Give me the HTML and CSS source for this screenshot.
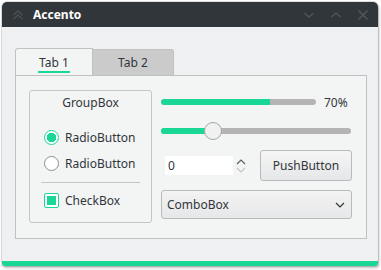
FILE: index.html
```html
<!DOCTYPE html>
<html>
<head>
<meta charset="utf-8">
<link rel="stylesheet" href="styles.css">
</head>
<body>
<div class="window">
  <div class="titlebar">
    <svg class="app-icon" width="12" height="12" viewBox="0 0 12 12"><path d="M1.5 6 L6 2 L10.5 6 M1.5 10 L6 6 L10.5 10" fill="none" stroke="#4a5057" stroke-width="1.5"/></svg>
    <span class="title">Accento</span>
    <div class="controls">
      <svg width="12" height="12" viewBox="0 0 12 12"><path d="M1.5 4 L6 8 L10.5 4" fill="none" stroke="#4f555c" stroke-width="1.5"/></svg>
      <svg width="12" height="12" viewBox="0 0 12 12"><path d="M1.5 8 L6 4 L10.5 8" fill="none" stroke="#4f555c" stroke-width="1.5"/></svg>
      <svg width="12" height="12" viewBox="0 0 12 12"><path d="M1.5 1.5 L10.5 10.5 M10.5 1.5 L1.5 10.5" fill="none" stroke="#4f555c" stroke-width="1.5"/></svg>
    </div>
  </div>
  <div class="content">
    <div class="tabs">
      <div class="tabbar">
        <div class="tab active"><span>Tab 1</span></div>
        <div class="tab"><span>Tab 2</span></div>
      </div>
      <div class="pane">
        <div class="groupbox">
          <div class="gb-title">GroupBox</div>
          <div class="option"><span class="radio checked"></span><span>RadioButton</span></div>
          <div class="option"><span class="radio"></span><span>RadioButton</span></div>
          <div class="sep"></div>
          <div class="option"><span class="check"></span><span>CheckBox</span></div>
        </div>
        <div class="right">
          <div class="progress-row">
            <div class="progress"><div class="fill" style="width:70%"></div></div>
            <span class="pct">70%</span>
          </div>
          <div class="slider-row">
            <div class="slider"><div class="sfill"></div><div class="handle"></div></div>
          </div>
          <div class="spin-row">
            <div class="spin"><span class="spin-field">0</span>
              <div class="arrows">
                <svg width="10" height="6" viewBox="0 0 10 6"><path d="M1 5 L5 1 L9 5" fill="none" stroke="#5c6166" stroke-width="1.2"/></svg>
                <svg width="10" height="6" viewBox="0 0 10 6"><path d="M1 1 L5 5 L9 1" fill="none" stroke="#c4c6c8" stroke-width="1.2"/></svg>
              </div>
            </div>
            <div class="button">PushButton</div>
          </div>
          <div class="combo"><span>ComboBox</span>
            <svg width="10" height="6" viewBox="0 0 10 6"><path d="M1 1 L5 5 L9 1" fill="none" stroke="#31363b" stroke-width="1.2"/></svg>
          </div>
        </div>
      </div>
    </div>
  </div>
  <div class="accent"></div>
</div>
</body>
</html>
```
FILE: styles.css
```css
* { box-sizing: border-box; }
html, body { margin: 0; padding: 0; background: #ffffff; }
body {
  font-family: "Noto Sans", "DejaVu Sans", sans-serif;
  font-size: 12px;
  color: #31363b;
  width: 381px;
  height: 270px;
  overflow: hidden;
}
.window {
  margin: 2px 0 0 2px;
  width: 376px;
  height: 264px;
  display: flex;
  flex-direction: column;
  background: #eff0f1;
  border-radius: 5px 5px 3px 3px;
  box-shadow: 0 0 0 1px rgba(0,0,0,0.12), 1px 2px 3px rgba(0,0,0,0.25);
  overflow: hidden;
}
.titlebar {
  height: 25px;
  flex: none;
  background: #31363b;
  display: flex;
  align-items: center;
  padding-left: 10px;
}
.app-icon { margin-right: 9px; }
.title {
  color: #ffffff;
  font-weight: bold;
  font-size: 12px;
}
.controls {
  margin-left: auto;
  display: flex;
  gap: 15px;
  padding-right: 9px;
  align-items: center;
}
.content {
  flex: 1;
  padding: 21px 0 0 13px;
}
.tabs { width: 352px; }
.tabbar {
  display: flex;
  height: 27px;
  align-items: flex-end;
}
.tab {
  height: 26px;
  width: 81px;
  background: #cbcbcc;
  border-radius: 0 3px 0 0;
  display: flex;
  align-items: center;
  justify-content: center;
  border: 1px solid #c0c1c2;
  border-bottom: none;
  border-left: none;
}
.tab.active {
  height: 27px;
  width: 78px;
  background: #f3f4f4;
  border: 1px solid #c0c1c2;
  border-bottom: none;
  border-radius: 3px 0 0 0;
}
.tab.active span {
  border-bottom: 2px solid #1bd796;
  line-height: 17px;
  padding: 0 1px;
  margin-top: 2px;
}
.pane {
  height: 164px;
  background: #f3f4f4;
  border: 1px solid #c0c1c2;
  display: flex;
  padding: 14px 0 0 13px;
  gap: 9px;
}
.groupbox {
  width: 123px;
  height: 133px;
  border: 1px solid #c4c5c6;
  border-radius: 3px;
  display: flex;
  flex-direction: column;
}
.gb-title {
  text-align: center;
  height: 26px;
  line-height: 24px;
}
.option {
  display: flex;
  align-items: center;
  height: 26px;
  padding-left: 14px;
  gap: 6px;
}
.gb-title + .option { margin-top: 7px; }
.radio {
  width: 15px;
  height: 15px;
  border-radius: 50%;
  border: 1px solid #8d8f91;
  background: #ffffff;
  flex: none;
}
.radio.checked {
  border-color: #1bd796;
  background: radial-gradient(circle, #1bd796 0 4.5px, #ffffff 5px);
}
.sep {
  height: 1px;
  background: #c4c5c6;
  margin: 6px 11px 4px 11px;
}
.check {
  width: 15px;
  height: 15px;
  border: 1px solid #1bd796;
  border-radius: 2px;
  background: #ffffff;
  padding: 2px;
  flex: none;
  display: flex;
}
.check::after {
  content: "";
  flex: 1;
  background: #1bd796;
}
.right {
  width: 191px;
  display: flex;
  flex-direction: column;
}
.progress-row {
  height: 24px;
  display: flex;
  align-items: center;
}
.progress {
  width: 155px;
  height: 6px;
  border-radius: 3px;
  background: #b4b4b4;
  overflow: hidden;
}
.progress .fill { height: 100%; background: #1bd796; border-radius: 3px 0 0 3px; }
.pct { margin-left: 8px; }
.slider-row {
  height: 34px;
  display: flex;
  align-items: center;
}
.slider {
  position: relative;
  width: 190px;
  height: 6px;
  border-radius: 3px;
  background: #b4b4b4;
}
.sfill {
  width: 52px;
  height: 100%;
  background: #1bd796;
  border-radius: 3px 0 0 3px;
}
.handle {
  position: absolute;
  left: 43px;
  top: -6px;
  width: 18px;
  height: 18px;
  border-radius: 50%;
  background: #f1f1f1;
  border: 1px solid #a4a5a6;
}
.spin-row {
  height: 31px;
  margin-top: 2px;
  display: flex;
  align-items: center;
}
.spin {
  display: flex;
  align-items: center;
  padding-left: 4px;
}
.spin-field {
  width: 68px;
  height: 19px;
  background: #ffffff;
  line-height: 19px;
  padding-left: 3px;
}
.arrows {
  display: flex;
  flex-direction: column;
  gap: 2px;
  margin-left: 3px;
}
.button {
  margin-left: auto;
  width: 92px;
  height: 31px;
  border: 1px solid #b9babb;
  border-radius: 3px;
  background: linear-gradient(#f5f5f5, #e6e7e8);
  display: flex;
  align-items: center;
  justify-content: center;
}
.combo {
  margin-top: 9px;
  height: 29px;
  border: 1px solid #b9babb;
  border-radius: 3px;
  background: linear-gradient(#f3f3f3, #e6e7e8);
  display: flex;
  align-items: center;
  padding: 0 6px 0 5px;
  justify-content: space-between;
}
.accent {
  height: 5px;
  flex: none;
  background: #1bd796;
  margin-top: auto;
}
```
